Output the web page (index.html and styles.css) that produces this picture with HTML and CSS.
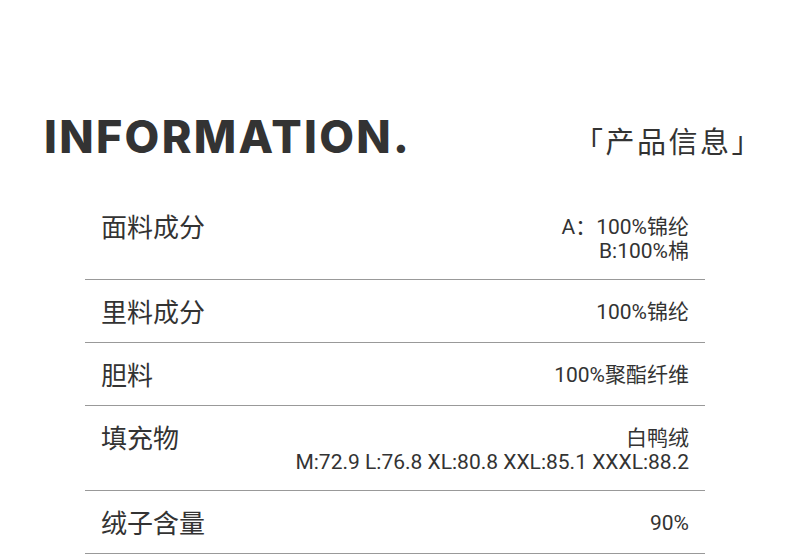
FILE: index.html
```html
<!DOCTYPE html>
<html lang="zh">
<head>
<meta charset="utf-8">
<link rel="stylesheet" href="styles.css">
</head>
<body>
<div class="page">
  <header class="header">
    <h1 class="title">INFORMATION.</h1>
    <div class="subtitle">「产品信息」</div>
  </header>
  <div class="table">
    <div class="row">
      <div class="label">面料成分</div>
      <div class="value"><div>A：100%锦纶</div><div>B:100%棉</div></div>
    </div>
    <div class="row">
      <div class="label">里料成分</div>
      <div class="value"><div>100%锦纶</div></div>
    </div>
    <div class="row">
      <div class="label">胆料</div>
      <div class="value"><div>100%聚酯纤维</div></div>
    </div>
    <div class="row">
      <div class="label">填充物</div>
      <div class="value"><div>白鸭绒</div><div>M:72.9 L:76.8 XL:80.8 XXL:85.1 XXXL:88.2</div></div>
    </div>
    <div class="row">
      <div class="label">绒子含量</div>
      <div class="value"><div>90%</div></div>
    </div>
  </div>
</div>
</body>
</html>
```

FILE: styles.css
```css
* { box-sizing: border-box; margin: 0; padding: 0; }
html, body { background: #ffffff; }
body {
  width: 790px;
  height: 554px;
  overflow: hidden;
  color: #333333;
  font-family: "Noto Sans CJK SC", "Noto Sans", sans-serif;
}
.page { width: 790px; }
.header {
  display: flex;
  justify-content: space-between;
  align-items: baseline;
  padding: 114px 27px 0 44px;
}
.title {
  font-family: "Inter", "DejaVu Sans", sans-serif;
  font-weight: 800;
  font-size: 45px;
  line-height: 45px;
  letter-spacing: 2.3px;
  color: #333333;
}
.subtitle {
  font-size: 29px;
  line-height: 40px;
  letter-spacing: 2.5px;
  color: #333333;
}
.table {
  margin: 35px 0 0 85px;
  width: 620px;
}
.row {
  display: flex;
  justify-content: space-between;
  align-items: flex-start;
  padding: 15px 16px 16px 16px;
  border-bottom: 1px solid #999999;
}
.label {
  font-size: 26px;
  line-height: 31px;
  color: #333333;
}
.value {
  padding-top: 5px;
  font-family: "Roboto", "Noto Sans CJK SC", sans-serif;
  font-size: 21px;
  line-height: 24px;
  text-align: right;
  color: #333333;
}
```
